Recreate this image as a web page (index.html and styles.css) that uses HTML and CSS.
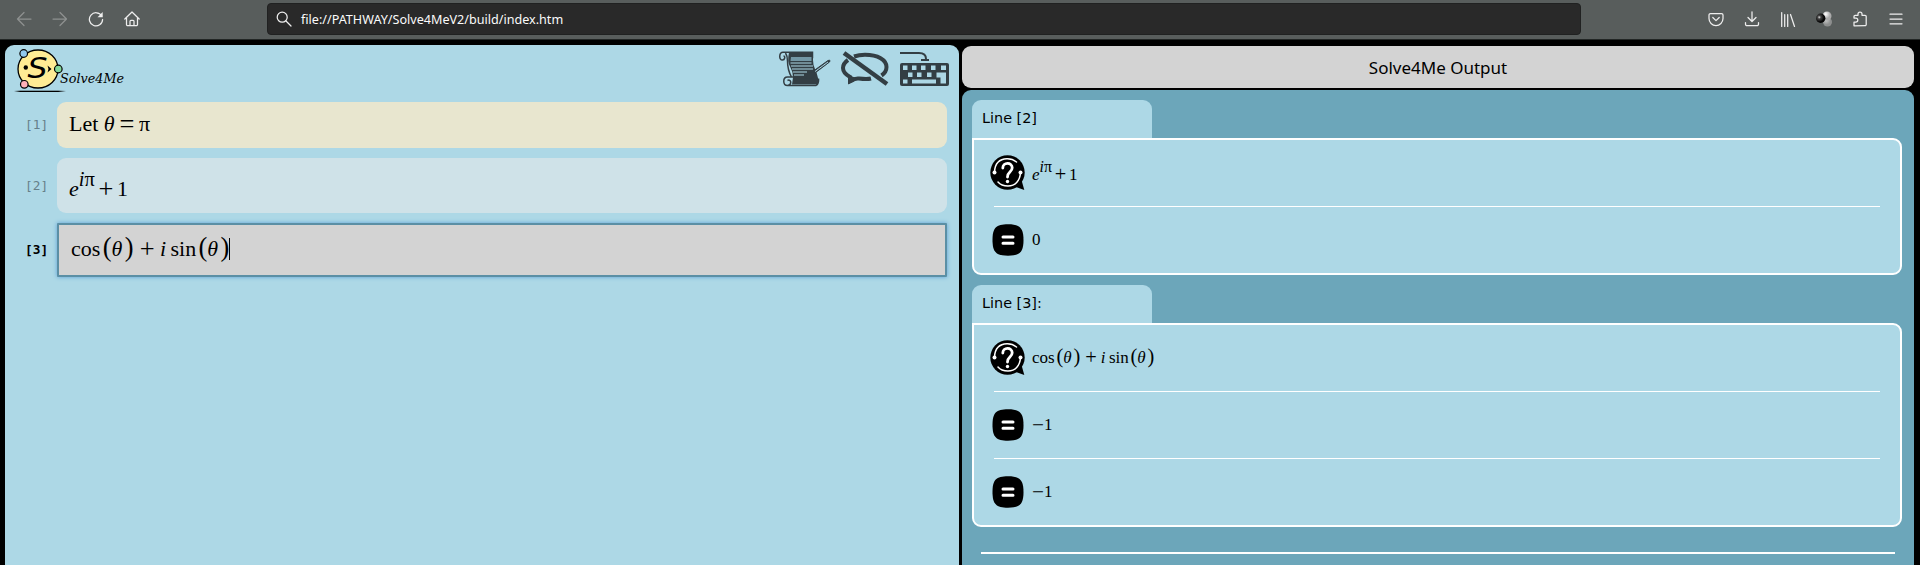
FILE: index.html
```html
<!DOCTYPE html>
<html lang="en">
<head>
<meta charset="utf-8">
<title>Solve4Me</title>
<link rel="stylesheet" href="styles.css">
</head>
<body>
<svg width="0" height="0" class="defs">
  <symbol id="question" viewBox="0 0 36 36">
    <circle cx="17.5" cy="17.5" r="17.2"/><path d="M23 31 31.5 25 34.3 35Z"/>
    <g fill="none" stroke="#fff" stroke-width="1.5" stroke-linecap="round"><path d="M4.5 17C5 8 10 4 17 3.800 21 3.700 24 5 26.500 7"/><path d="M30.500 17.500C30 26 25 31 18 31 14 31 10.500 30 8 27"/><path d="M12.800 13C12.800 7 22.200 7 22.200 12.800 22.200 17 17.500 16.500 17.500 22" stroke-width="2.800"/></g>
    <circle cx="4.500" cy="17.500" r="2" fill="#fff"/><circle cx="30.500" cy="17.500" r="2" fill="#fff"/><circle cx="17.500" cy="26.500" r="1.700" fill="#fff"/>
  </symbol>
  <symbol id="equals" viewBox="0 0 32 32">
    <path d="M16 .3C28 .3 31.500 4 31.500 16S28 31.700 16 31.700.500 28 .500 16 4 .3 16 .3Z"/>
    <path d="M11 13h10M11 19.200h10" stroke="#fff" stroke-width="3" stroke-linecap="round"/>
  </symbol>
</svg>
<header class="toolbar">
  <nav class="nav">
    <svg class="dim" viewBox="0 0 16 16"><path d="M15 8H1.500M8 1.500 1.500 8 8 14.500"/></svg>
    <svg class="dim" viewBox="0 0 16 16"><path d="M1 8h13.500M8 1.500 14.500 8 8 14.500"/></svg>
    <svg viewBox="0 0 16 16"><path d="M13.700 5A6.600 6.600 0 1 0 14.600 8.500"/><path d="M14.700 1v5.200H9.500Z" fill="#eee" stroke="none"/></svg>
    <svg viewBox="0 0 16 16"><path d="M.8 8 8 1l7.200 7M2.500 7v6.500a1.200 1.200 0 0 0 1.200 1.200h8.600a1.200 1.200 0 0 0 1.200-1.200V7M6 14.500v-4.200a1 1 0 0 1 1-1h2a1 1 0 0 1 1 1v4.200"/></svg>
  </nav>
  <div class="address">
    <svg viewBox="0 0 16 16"><circle cx="6.200" cy="6.200" r="5"/><path d="m10 10 5 5"/></svg>
    <span>file://PATHWAY/Solve4MeV2/build/index.htm</span>
  </div>
  <div class="tools">
    <svg viewBox="0 0 16 16"><path d="M2.500 2.500h11a1.500 1.500 0 0 1 1.500 1.500v3.500a7 7 0 0 1-14 0V4a1.500 1.500 0 0 1 1.500-1.500ZM4.800 6.500 8 9.600l3.200-3.100"/></svg>
    <svg viewBox="0 0 16 16"><path d="M8 .8v9.500M4 6.500l4 4 4-4M1.500 11.500v1.700a1.500 1.500 0 0 0 1.500 1.500h10a1.500 1.500 0 0 0 1.500-1.500v-1.700"/></svg>
    <svg viewBox="0 0 16 16"><path d="M1.700 1.500v14M4.700 3.500v12M7.700 3.500v12M10.500 3.500l4 12"/></svg>
    <svg viewBox="0 0 16 16" class="spheres"><defs><radialGradient id="dark" cx=".35" cy=".4"><stop stop-color="#ddd"/><stop offset=".35" stop-color="#444"/><stop offset="1" stop-color="#050505"/></radialGradient><radialGradient id="light" cx=".35" cy=".3"><stop stop-color="#fff"/><stop offset="1" stop-color="#aaa"/></radialGradient></defs><circle cx="11.500" cy="11" r="4.500" fill="url(#light)" opacity=".65"/><circle cx="11" cy="5" r="4.500" fill="url(#light)"/><circle cx="4.700" cy="7.200" r="4.700" fill="url(#dark)"/></svg>
    <svg viewBox="0 0 16 16"><path d="M2 14.800V11h1.800a2 2 0 0 0 0-4H2V5.500A1.200 1.200 0 0 1 3.200 4.300H6V3a2 2 0 0 1 4 0v1.300h3a1.200 1.200 0 0 1 1.200 1.200v8a1.200 1.200 0 0 1-1.200 1.200Z"/></svg>
    <svg viewBox="0 0 16 16"><path d="M2 3.200h12M2 8h12M2 12.800h12"/></svg>
  </div>
</header>
<main class="app">
  <section class="editor">
    <div class="brand">
      <svg class="logo" viewBox="0 0 54 48"><defs><linearGradient id="shade"><stop stop-opacity="0"/><stop offset=".12" /><stop offset=".85"/><stop offset="1" stop-opacity="0"/></linearGradient></defs>
        <ellipse cx="24" cy="22" rx="20" ry="19" fill="#ffec94" stroke="#000" stroke-width="1.300"/>
        <text x="13.500" y="31" class="mark" textLength="20" lengthAdjust="spacingAndGlyphs">S</text>
        <circle cx="11.800" cy="20.500" r="2.200"/><path d="m33.500 18.500 4 3.500-4 3.500 1-3.500Z"/>
        <g stroke="#000" stroke-width="1.200"><circle cx="9.700" cy="6.500" r="3.800" fill="#91c9ef"/><circle cx="44.300" cy="22" r="3.800" fill="#83d89a"/><circle cx="10.300" cy="37.300" r="3.800" fill="#ffb0b8"/></g>
        <rect y="43.700" width="52" height="1.300" fill="url(#shade)"/>
      </svg>
      <span class="name">Solve4Me</span>
      <div class="actions">
        <svg width="52" height="36" viewBox="0 0 52 36">
          <path d="M10 1.500h24V9q0 5 2 9t3 9v6.500H13l1-7q0-6-3-11T10 1.500Z"/>
          <path d="M4 1.200h29.500v6M4 1.200C0 1.200-.5 9 3.500 9 6 9 6.500 5 4.500 5M6.500 2q2 3 2 8 0 9 4 16M14 26H8.500c-5 0-5 8.500 0 8.500H37q3-2 2.500-7M8.500 34.500c5-1 3.500-7 0-5" fill="none" stroke="#333e44" stroke-width="1.500"/>
          <path d="M12 6h20.500v4h-21z" fill="#7397a5"/>
          <path d="M11.500 12h21M12 15h22M13 18h21M14 21h14M15 24h10" stroke="#add8e6" stroke-width="1.200"/>
          <path d="M26 27q2-1 3-4 2-2 4-2L49 9.500q3-1 1.500 1.500L36 22q0 5-5 5.500Z" stroke="#333e44" stroke-width="1"/><path d="m36 20.500 13-9.500" stroke="#add8e6"/>
        </svg>
        <svg width="50" height="36" viewBox="0 0 50 36"><g fill="none" stroke="#333e44"><path d="M14 5.500Q19 3.800 25 3.800C38 3.800 46.500 9 46.500 16q0 5-5 8.500M8 9Q3 12.500 3 17q0 5 7 9v4q5-3 9-2.500 8 1 12 0" stroke-width="4"/><path d="m4 2 43 31" stroke-width="4.500"/></g><path d="M9 24v9q5-2 9-5Z"/></svg>
        <svg width="50" height="36" viewBox="0 0 50 36"><path d="M1 2h19q7 0 7 6M22 9h8" fill="none" stroke="#333e44" stroke-width="2"/><rect x="1" y="12" width="49" height="23" rx="2"/><path d="M4 14.500h4.500v4.500H4zM13 14.500h4.500v4.500H13zM22 14.500h4.500v4.500H22zM32 14.500h4.500v4.500H32zM42 14.500h5v4.500h-5zM9 21.500h4.500v4.500H9zM18 21.500h4.500v4.500H18zM28 21.500h4.500v4.500H28zM4 28.500h4.500v4H4zM13 28.500h24v4H13zM37.500 21.500H47v11h-5.500v-6h-4z" fill="#add8e6"/></svg>
      </div>
    </div>
    <div class="line"><span class="num">[1]</span><div class="cell let"><span class="math"><span>Let</span><i class="gap-s">θ</i><b class="op eqs">=</b><span>π</span></span></div></div>
    <div class="line"><span class="num">[2]</span><div class="cell expr"><span class="math"><i>e</i><span class="sup"><i>i</i>π</span><b class="op tight">+</b><span>1</span></span></div></div>
    <div class="line"><span class="num active">[3]</span><div class="cell focus"><span class="math"><span class="fn">cos</span><b class="paren">(</b><i>θ</i><b class="paren">)</b><b class="op">+</b><i>i</i><span class="fn sin">sin</span><b class="paren">(</b><i>θ</i><b class="paren">)</b></span><span class="caret"></span></div></div>
  </section>
  <section class="output">
    <h1 class="title">Solve4Me Output</h1>
    <div class="results">
      <h2 class="tab">Line [2]</h2>
      <div class="card">
        <div class="row"><svg class="ico"><use href="#question"/></svg><span class="math small lower"><i>e</i><span class="sup"><i>i</i>π</span><b class="op tight">+</b><span>1</span></span></div>
        <div class="row"><svg class="ico eq"><use href="#equals"/></svg><span class="math small">0</span></div>
      </div>
      <h2 class="tab">Line [3]:</h2>
      <div class="card">
        <div class="row"><svg class="ico"><use href="#question"/></svg><span class="math small"><span class="fn">cos</span><b class="paren">(</b><i>θ</i><b class="paren">)</b><b class="op">+</b><i>i</i><span class="fn sin">sin</span><b class="paren">(</b><i>θ</i><b class="paren">)</b></span></div>
        <div class="row"><svg class="ico eq"><use href="#equals"/></svg><span class="math small"><b class="neg">−</b>1</span></div>
        <div class="row"><svg class="ico eq"><use href="#equals"/></svg><span class="math small"><b class="neg">−</b>1</span></div>
      </div>
      <div class="rule"></div>
    </div>
  </section>
</main>
</body>
</html>
```
FILE: styles.css
```css
* { box-sizing: border-box; }
html, body { height: 100%; }
body { margin: 0; background: #000; overflow: hidden; font-family: "Noto Sans", sans-serif; color: #000; display: flex; flex-direction: column; }
.defs { display: block; flex: none; height: 0; }
.toolbar { height: 40px; flex: none; display: flex; background: #585d5c; border-bottom: 1px solid #222625; padding: 3px 16px 4px 16px; justify-content: space-between; }
.toolbar svg { width: 16px; height: 16px; fill: none; stroke: #eee; stroke-width: 1.25; stroke-linecap: round; stroke-linejoin: round; flex: none; }
.nav { display: flex; align-items: center; gap: 20px; width: 251px; }
.nav .dim { stroke: #8d9190; }
.address { width: 1314px; height: 32px; background: #292929; border: 1px solid #202121; border-radius: 4px; display: flex; align-items: center; padding: 0 8px; gap: 9px; font-size: 12.6px; color: #fbfbfb; }
.tools { display: flex; align-items: center; gap: 20px; margin-left: auto; }
.toolbar .spheres { stroke: none; }
.app { flex: 1; min-height: 0; display: flex; gap: 3px; padding: 5px 6px 0 5px; }
.editor { width: 954px; flex: none; background: #add8e6; border-radius: 9px 9px 0 0; padding: 0 12px 0 9px; }
.brand { height: 57px; display: flex; align-items: flex-start; }
.logo { width: 54px; height: 48px; margin-top: 2px; flex: none; }
.mark { font: italic 28px "DejaVu Sans", sans-serif; }
.name { font: italic 12.8px/20px "DejaVu Serif", serif; margin: 24px 0 0 -8px; }
.actions { margin: 6px -2px 0 auto; display: flex; gap: 9px; fill: #333e44; }
.line { display: flex; align-items: center; margin-bottom: 10px; }
.num { width: 43px; padding: 0 0 1px 11px; flex: none; font: 12.8px "DejaVu Sans Mono", monospace; color: #66808a; }
.num.active { color: #000; font-weight: bold; }
.cell { flex: 1; height: 46px; border-radius: 9px; padding: 0 0 3px 12px; display: flex; align-items: center; }
.let { background: #e8e6cf; }
.expr { background: #cfe2e8; height: 55px; padding: 6px 0 0 12px; }
.focus { background: #d3d3d3; height: 54px; border: 2px solid #5b8fa5; border-radius: 1px; box-shadow: 0 0 4px #5b9fd6; }
.math { display: flex; align-items: baseline; font: 22px/28px "Liberation Serif", serif; white-space: nowrap; }
.math b { font-weight: normal; }
.gap-s { margin-left: .25em; }
.math .op { margin: 0 .2em 0 .24em; font-size: 1.2em; line-height: 1; position: relative; top: .07em; }
.math .eqs { margin: 0 .18em; }
.math .tight { margin: 0 .14em; }
.sup { font-size: .93em; position: relative; top: -.5em; }
.paren { font-size: 1.2em; line-height: 1; margin-left: .09em; }
.sin { margin-left: .2em; }
.caret { width: 1px; height: 22px; background: #000; }
.output { flex: 1; min-width: 0; display: flex; flex-direction: column; padding-top: 1px; gap: 2px; }
.title { margin: 0; height: 42px; flex: none; background: #d3d3d3; border-radius: 9px; font-size: 17px; line-height: 43px; font-weight: normal; text-align: center; }
.results { flex: 1; background: #6ca6ba; border-radius: 9px 9px 0 0; padding: 10px 12px 0 10px; }
.tab { margin: 0; width: 180px; height: 38px; background: #add8e6; border-radius: 9px 9px 0 0; padding-left: 10px; font: 14.4px/37px "DejaVu Sans", sans-serif; }
.card { border: 2px solid #fff; border-radius: 0 9px 9px 9px; background: #add8e6; margin-bottom: 10px; padding: 0 20px; }
.row { height: 67px; display: flex; align-items: center; }
.row + .row { border-top: 1px solid #fff; }
.row:first-child { height: 66px; }
.ico { width: 36px; height: 36px; margin: 0 6px 0 -4px; }
.eq { width: 32px; height: 32px; margin: 0 8px 0 -2px; }
.math.small { font-size: 17px; padding-bottom: 1px; }
.math.lower { padding: 3px 0 0; }
.neg { font-size: 1.25em; line-height: 1; position: relative; top: .1em; }
.rule { height: 2px; background: #fff; margin: 25px 7px 0 9px; }
```
